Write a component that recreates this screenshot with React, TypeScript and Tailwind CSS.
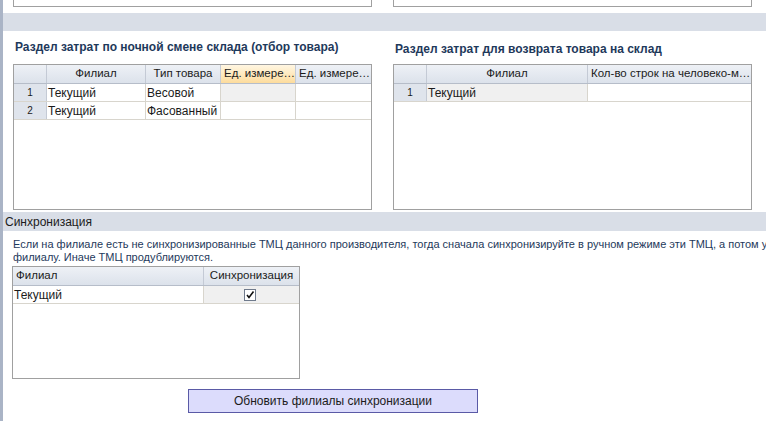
import type { ReactNode } from 'react'

type Col = { w: string; label: string; align?: 'left' | 'center'; hot?: boolean }
type Cell = { text?: ReactNode; focus?: boolean }

const headCls = 'h-[19px] border-b border-[#b6bdc9] bg-gradient-to-b from-[#eef1f6] to-[#dce2eb] text-[11.5px]'

function Grid({ cols, rows, indicator, className }: { cols: Col[]; rows: Cell[][]; indicator?: boolean; className: string }) {
  return (
    <div className={`overflow-hidden border border-[#a0a0a0] bg-white ${className}`}>
      <div className={`flex ${headCls}`}>
        {indicator && <div className="w-[33px] shrink-0 border-r border-[#c4cad5]" />}
        {cols.map((c, i) => (
          <div
            key={i}
            className={`flex shrink-0 items-center overflow-hidden whitespace-nowrap px-[3px] ${c.w} ${
              c.align === 'left' ? 'justify-start' : 'justify-center'
            } ${i < cols.length - 1 ? 'border-r border-[#c4cad5]' : ''} ${
              c.hot ? 'bg-gradient-to-b from-[#fff6e2] to-[#fddc9c]' : ''
            }`}
          >
            {c.label}
          </div>
        ))}
      </div>
      {rows.map((r, ri) => (
        <div key={ri} className="flex h-[18px] border-b border-[#d8d5cd]">
          {indicator && (
            <div className="flex w-[33px] shrink-0 items-center justify-center border-r border-[#c4cad5] bg-[#dfe4ec] text-[10px]">
              {ri + 1}
            </div>
          )}
          {r.map((cell, ci) => (
            <div
              key={ci}
              className={`flex shrink-0 items-center overflow-hidden whitespace-nowrap px-[1px] ${cols[ci].w} ${
                ci < r.length - 1 ? 'border-r border-[#d8d5cd]' : ''
              } ${cell.focus ? 'bg-[#f0f0f0]' : ''}`}
            >
              {cell.text}
            </div>
          ))}
        </div>
      ))}
    </div>
  )
}

function Check() {
  return (
    <div className="mx-auto flex h-[12px] w-[12px] -translate-x-[2px] items-center justify-center border border-[#6f7a8c] bg-white">
      <svg width="10" height="10" viewBox="0 0 10 10">
        <path d="M2 5 L4 7.5 L8.5 1.5" fill="none" stroke="#111" strokeWidth="1.6" />
      </svg>
    </div>
  )
}

export default function App() {
  return (
    <div className="flex h-[421px] w-[766px] overflow-hidden bg-white font-['Liberation_Sans',Arial,sans-serif] text-[12px] text-[#1b1b1b]">
      <div className="w-[3px] shrink-0 bg-[#aab4c6]" />
      <div className="flex min-w-0 flex-1 flex-col">
        <div className="flex h-[13px] shrink-0 gap-[21px] pl-[10px]">
          <div className="h-[7px] w-[359px] border-x border-b border-[#a0a0a0]" />
          <div className="h-[7px] w-[359px] border-x border-b border-[#a0a0a0]" />
        </div>
        <div className="h-[18px] shrink-0 bg-[#d9dee7]" />

        <div className="flex shrink-0 gap-[21px] pl-[10px]">
          <div className="flex w-[359px] flex-col">
            <div className="h-[33px] pl-[2px] pt-[9px] text-[12px] font-bold leading-[14px] text-[#1e395b]">
              Раздел затрат по ночной смене склада (отбор товара)
            </div>
            <Grid
              className="h-[146px]"
              indicator
              cols={[
                { w: 'w-[99px]', label: 'Филиал' },
                { w: 'w-[75px]', label: 'Тип товара' },
                { w: 'w-[75px]', label: 'Ед. измере…', hot: true, align: 'left' },
                { w: 'w-[75px]', label: 'Ед. измере…', align: 'left' },
              ]}
              rows={[
                [{ text: 'Текущий' }, { text: 'Весовой' }, { focus: true }, {}],
                [{ text: 'Текущий' }, { text: 'Фасованный' }, {}, {}],
              ]}
            />
          </div>
          <div className="flex w-[359px] flex-col">
            <div className="h-[33px] pl-[2px] pt-[11px] text-[12px] font-bold leading-[14px] text-[#1e395b]">
              Раздел затрат для возврата товара на склад
            </div>
            <Grid
              className="h-[146px]"
              indicator
              cols={[
                { w: 'w-[161px]', label: 'Филиал' },
                { w: 'w-[163px]', label: 'Кол-во строк на человеко-м…', align: 'left' },
              ]}
              rows={[[{ text: 'Текущий', focus: true }, {}]]}
            />
          </div>
        </div>

        <div className="mt-[2px] flex h-[19px] shrink-0 items-center bg-[#d9dee7] pl-[2px]">Синхронизация</div>

        <div className="shrink-0 overflow-hidden pl-[10px] pt-[7px] text-[11px] leading-[13px] text-[#1e395b]">
          <div className="whitespace-nowrap">
            Если на филиале есть не синхронизированные ТМЦ данного производителя, тогда сначала синхронизируйте в ручном режиме эти ТМЦ, а потом ус
          </div>
          <div className="whitespace-nowrap">филиалу. Иначе ТМЦ продублируются.</div>
        </div>

        <div className="mt-[2px] shrink-0 pl-[9px]">
          <Grid
            className="h-[113px] w-[288px]"
            cols={[
              { w: 'w-[191px]', label: 'Филиал', align: 'left' },
              { w: 'w-[95px]', label: 'Синхронизация' },
            ]}
            rows={[[{ text: 'Текущий' }, { text: <Check />, focus: true }]]}
          />
        </div>

        <div className="mt-[10px] shrink-0 pl-[185px]">
          <button
            type="button"
            className="flex h-[24px] w-[290px] items-center justify-center border border-[#5a5aa6] bg-[#dcdcfc] text-[12px] text-[#1b1b1b]"
          >
            Обновить филиалы синхронизации
          </button>
        </div>
      </div>
    </div>
  )
}
